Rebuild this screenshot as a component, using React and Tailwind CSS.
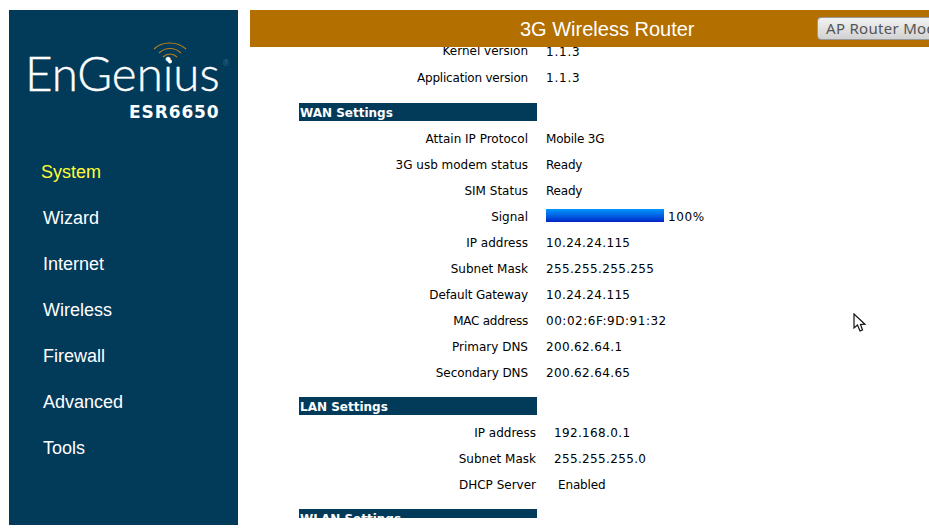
const MENU = ['System', 'Wizard', 'Internet', 'Wireless', 'Firewall', 'Advanced', 'Tools']

const DIGITS = 'tracking-[0.35px]'

const WAN_ROWS = [
  { label: 'Attain IP Protocol', value: 'Mobile 3G', valueClass: 'tracking-[-0.2px]' },
  { label: '3G usb modem status', value: 'Ready', valueClass: 'tracking-[-0.2px]' },
  { label: 'SIM Status', value: 'Ready', valueClass: 'tracking-[-0.2px]' },
  { label: 'Signal' },
  { label: 'IP address', value: '10.24.24.115', valueClass: DIGITS },
  { label: 'Subnet Mask', value: '255.255.255.255', valueClass: DIGITS },
  { label: 'Default Gateway', labelClass: 'tracking-[-0.13px]', value: '10.24.24.115', valueClass: DIGITS },
  { label: 'MAC address', labelClass: 'tracking-[-0.27px]', value: '00:02:6F:9D:91:32', valueClass: 'tracking-[0.53px]' },
  { label: 'Primary DNS', value: '200.62.64.1', valueClass: DIGITS },
  { label: 'Secondary DNS', labelClass: 'tracking-[-0.08px]', value: '200.62.64.65', valueClass: DIGITS },
]

function Row({ label, labelClass = '', children }) {
  return (
    <div className="flex h-[26px] items-center">
      <div className={`w-[229px] text-right ${labelClass}`}>{label}</div>
      <div className="ml-[18px] flex items-center">{children}</div>
    </div>
  )
}

function LanRow({ label, children, pad = 'ml-[18px]', valueClass = DIGITS }) {
  return (
    <div className="flex h-[26px] items-center">
      <div className="w-[237px] text-right">{label}</div>
      <div className={`${pad} ${valueClass}`}>{children}</div>
    </div>
  )
}

function SectionBar({ children }) {
  return (
    <div className="h-[18px] w-[238px] overflow-hidden bg-[#023a5a] pl-[1px] text-[12px] font-bold leading-[21px] text-white">
      {children}
    </div>
  )
}

function Logo() {
  return (
    <div className="relative h-[120px] text-white">
      <svg className="absolute left-[143px] top-[28px]" width="36" height="30" viewBox="0 0 36 30" fill="none" stroke="#b8811c" strokeWidth="1.2">
        <path d="M2 11C10 3 25 3 34 11" />
        <path d="M7 15C13 9 23 9 29 15" />
        <path d="M11 19C15 15 21 15 25 19" />
        <circle cx="18" cy="23.5" r="2" fill="#fff" stroke="none" />
      </svg>
      <div className="absolute left-[16px] top-[35px] font-['Lato','Liberation_Sans',sans-serif] text-[47.5px] font-light leading-[56px] whitespace-nowrap [-webkit-text-stroke:0.4px_white]">
        EnGenius
      </div>
      <div className="absolute left-[213px] top-[49px] text-[8px] leading-[10px] text-[#2f6484]">®</div>
      <div className="absolute left-[120px] top-[90px] font-['DejaVu_Sans',sans-serif] text-[17px] font-bold leading-[24px] tracking-[0.9px]">
        ESR6650
      </div>
    </div>
  )
}

export default function App() {
  return (
    <div className="relative flex h-[528px] w-[929px] overflow-hidden bg-white pl-[9px] pt-[10px] font-['DejaVu_Sans',sans-serif] text-[12px] text-black">
      <aside className="h-[515px] w-[229px] shrink-0 bg-[#023a5a]">
        <Logo />
        <nav className="mt-[19px] font-['Liberation_Sans',sans-serif] text-[18px] text-white">
          {MENU.map((item, i) => (
            <div
              key={item}
              className={i === 0 ? 'h-[46px] pl-[32px] leading-[46px] text-[#ffff33]' : 'h-[46px] pl-[34px] leading-[46px]'}
            >
              {item}
            </div>
          ))}
        </nav>
      </aside>

      <main className="ml-[12px] h-[508px] min-w-0 flex-1">
        <header className="flex h-[37px] items-center overflow-hidden bg-[#b36f00] pl-[270px] whitespace-nowrap">
          <div className="w-[174px] shrink-0 font-['Liberation_Sans',sans-serif] text-[20px] text-white">
            3G Wireless Router
          </div>
          <button
            type="button"
            className="ml-[123px] h-[23px] w-[130px] shrink-0 rounded-[4px] border border-[#999] bg-gradient-to-b from-[#f2f2f2] to-[#d2d2d2] pb-[2px] pl-[8px] text-left font-['Noto_Sans',sans-serif] text-[15px] leading-[18px] tracking-[0.3px] text-[#555]"
          >
            AP Router Mode
          </button>
        </header>

        <div className="h-[471px] overflow-hidden pl-[49px]">
          <div className="-mt-[9px]">
            <Row label="Kernel version">
              <span className="mt-[2px] tracking-[0.8px]">1.1.3</span>
            </Row>
            <Row label="Application version" labelClass="tracking-[-0.2px] pt-[1px]">
              <span className="mt-[2px] tracking-[0.8px]">1.1.3</span>
            </Row>

            <div className="mt-[13px]">
              <SectionBar>WAN Settings</SectionBar>
            </div>
            <div className="mt-[5px]">
              {WAN_ROWS.map(({ label, labelClass, value, valueClass }) => (
                <Row key={label} label={label} labelClass={labelClass}>
                  {value ? (
                    <span className={valueClass}>{value}</span>
                  ) : (
                    <>
                      <div className="mb-[3px] h-[13px] w-[118px] bg-gradient-to-b from-[#0096ff] to-[#0a1fc4]" />
                      <span className="ml-[4px] tracking-[0.6px]">100%</span>
                    </>
                  )}
                </Row>
              ))}
            </div>

            <div className="mt-[11px]">
              <SectionBar>LAN Settings</SectionBar>
            </div>
            <div className="mt-[5px]">
              <LanRow label="IP address">192.168.0.1</LanRow>
              <LanRow label="Subnet Mask">255.255.255.0</LanRow>
              <LanRow label="DHCP Server" pad="ml-[22px]" valueClass="tracking-[-0.15px]">Enabled</LanRow>
            </div>

            <div className="mt-[11px]">
              <SectionBar>WLAN Settings</SectionBar>
            </div>
          </div>
        </div>
      </main>

      <svg className="absolute left-[853px] top-[313px]" width="14" height="20" viewBox="0 0 14 20" fill="#fff" stroke="#111" strokeWidth="1.2">
        <path d="M1 1V15L4.5 12L7 18L9.5 17L7.5 11.5L12 11.2Z" />
      </svg>
    </div>
  )
}
